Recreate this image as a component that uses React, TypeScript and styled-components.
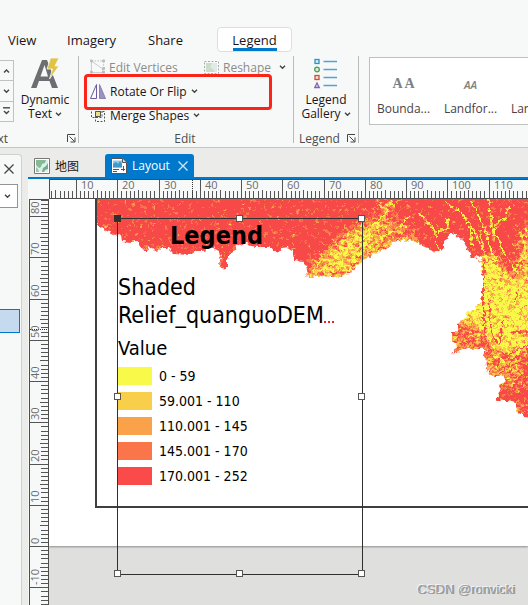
import React, { useEffect, useState } from "react";
import styled, { createGlobalStyle, css } from "styled-components";

const UI_FONT = `"Open Sans", "Noto Sans", "Noto Sans CJK SC", sans-serif`;
const MAP_FONT = `"DejaVu Sans Condensed", "DejaVu Sans", sans-serif`;
const BLUE = "#0078cc";

const GlobalStyle = createGlobalStyle`
  * { box-sizing: border-box; }
  body { margin: 0; background: #ebebea; overflow: hidden; }
  button { font: inherit; color: inherit; background: none; border: 0; padding: 0; margin: 0; }
  svg { display: block; flex: none; }
`;

const Window = styled.div`
  display: flex;
  flex-direction: column;
  height: 100vh;
  overflow: hidden;
  background: #ebebea;
  color: #1c1418;
  font-family: ${UI_FONT};
  font-size: 12px;
`;

/* ---------- ribbon ---------- */

const Ribbon = styled.header`
  flex: none;
  padding-top: 27px;
  background: #f7f9f9;
  border-bottom: 1px solid #c3c5c5;
`;

const RibbonTabs = styled.nav`
  display: flex;
  height: 25px;
  padding-left: 8px;
`;

const RibbonTab = styled.button<{ $width: number; $active?: boolean }>`
  position: relative;
  width: ${(p) => p.$width}px;
  text-align: left;
  font-size: 13px;
  line-height: 26px;
  ${(p) =>
    p.$active &&
    css`
      text-align: center;
      background: #fff;
      border: 1px solid #dcdedf;
      border-radius: 4px;
      line-height: 24px;
      &::after {
        content: "";
        position: absolute;
        left: 15px;
        right: 14px;
        bottom: 0;
        height: 3px;
        background: ${BLUE};
      }
    `}
`;

const Groups = styled.div`
  display: flex;
  height: 95px;
  padding: 4px 0 4px;
`;

const Group = styled.section<{ $width: number }>`
  position: relative;
  flex: none;
  display: flex;
  flex-direction: column;
  width: ${(p) => p.$width}px;
  border-right: 1px solid #b9bbbb;
`;

const GroupBody = styled.div`
  display: flex;
  flex: 1;
`;

const GroupFooter = styled.div<{ $center?: boolean }>`
  display: flex;
  align-items: center;
  justify-content: ${(p) => (p.$center ? "center" : "space-between")};
  height: 9px;
  line-height: 16px;
  padding: 0 2px 0 ${(p) => (p.$center ? 0 : 5)}px;
  color: #4c4c4c;
`;

const ClippedLabel = styled.span`
  display: flex;
  justify-content: flex-end;
  width: 8px;
  margin-left: -5px;
  overflow: hidden;
`;

const Stepper = styled.div`
  display: flex;
  flex-direction: column;
  width: 14px;
  height: 62px;
  margin-top: 4px;
  border: 1px solid #c0c2c2;
  border-left: 0;
`;

const StepButton = styled.button`
  display: flex;
  flex: 1;
  align-items: center;
  justify-content: center;
  & + & { border-top: 1px solid #c0c2c2; }
`;

const BigButton = styled.button<{ $width: number }>`
  display: flex;
  flex-direction: column;
  align-items: center;
  justify-content: flex-start;
  width: ${(p) => p.$width}px;
  padding-top: 1px;
  line-height: 14px;
  & > svg { height: 36px; }
`;

const Caption = styled.span`
  display: flex;
  align-items: center;
  gap: 3px;
`;

const EditList = styled.div`
  display: flex;
  flex-direction: column;
  gap: 4px;
  padding: 1px 0 0 11px;
`;

const EditRow = styled.div`
  display: flex;
  height: 20px;
`;

const EditButton = styled.button<{ $muted?: boolean; $width?: number }>`
  display: flex;
  align-items: center;
  justify-content: flex-start;
  gap: 4px;
  width: ${(p) => (p.$width ? `${p.$width}px` : "auto")};
  white-space: nowrap;
  color: ${(p) => (p.$muted ? "#8b8b8b" : "#1c1418")};
  & > svg + svg { margin-left: ${(p) => (p.$muted ? 4 : 0)}px; }
`;

const Highlight = styled.div`
  position: absolute;
  left: 5px;
  top: 18px;
  width: 188px;
  height: 36px;
  border: 3px solid #fb2418;
  border-radius: 4px;
`;

const Gallery = styled.div`
  display: flex;
  flex: 1;
  height: 68px;
  margin: 1px 0 0 10px;
  overflow: hidden;
  background: #fff;
  border: 1px solid #bfc1c1;
  border-right: 0;
`;

const GalleryItem = styled.button`
  flex: none;
  display: flex;
  flex-direction: column;
  align-items: center;
  justify-content: flex-start;
  width: 67px;
  padding-top: 16px;
  line-height: 16px;
  color: #4b4145;
`;

const Sample = styled.span<{ $italic?: boolean }>`
  height: 27px;
  color: #808080;
  font: ${(p) =>
    p.$italic ? `italic 600 11px/22px "Open Sans", sans-serif` : `bold 14px/20px "Liberation Serif", serif`};
`;

/* ---------- workspace ---------- */

const Workspace = styled.div`
  display: flex;
  flex: 1;
  min-height: 0;
  padding-top: 6px;
`;

const SidePane = styled.aside`
  flex: none;
  display: flex;
  flex-direction: column;
  width: 22px;
  margin-right: 6px;
  background: #f7f9f9;
  border: 1px solid #d0d1d1;
  border-width: 1px 1px 0 0;
  border-radius: 0 4px 0 0;
`;

const CloseButton = styled.button`
  display: flex;
  align-items: center;
  justify-content: center;
  width: 18px;
  height: 28px;
`;

const Picker = styled.button`
  display: flex;
  align-items: center;
  justify-content: center;
  width: 18px;
  height: 24px;
  background: #fff;
  border: 1px solid #929494;
  border-left: 0;
  margin-top: 1px;
  padding-right: 3px;
`;

const SelectedRow = styled.div`
  width: 20px;
  height: 24px;
  margin-top: 101px;
  background: #c5daef;
  border: 1px solid ${BLUE};
  border-left: 0;
`;

const Documents = styled.main`
  display: flex;
  flex-direction: column;
  flex: 1;
  min-width: 0;
`;

const DocTabs = styled.div`
  display: flex;
  height: 25px;
  padding-left: 6px;
  border-bottom: 2px solid ${BLUE};
`;

const DocTab = styled.button<{ $active?: boolean }>`
  display: flex;
  align-items: center;
  justify-content: flex-start;
  gap: 5px;
  height: 23px;
  width: ${(p) => (p.$active ? 89 : 71)}px;
  padding-left: ${(p) => (p.$active ? 6 : 0)}px;
  color: ${(p) => (p.$active ? "#fff" : "#1c1418")};
  background: ${(p) => (p.$active ? BLUE : "transparent")};
  border-radius: 3px 3px 0 0;
  & > svg + svg { margin-left: 3px; }
`;

const View = styled.div`
  display: grid;
  flex: 1;
  min-height: 0;
  grid-template-columns: 21px minmax(0, 1fr);
  grid-template-rows: 20px minmax(0, 1fr);
  background: #f7f9f9;
`;

const RulerSvg = styled.svg`
  width: 100%;
  height: 100%;
  overflow: hidden;
  text { font: 11px "Open Sans", sans-serif; fill: #6b6b6b; }
`;

const Canvas = styled.div`
  position: relative;
  overflow: hidden;
  background: #dfdfde;
`;

const Paper = styled.div`
  height: 347px;
  padding-left: 46px;
  background: #fff;
  box-shadow: 0 1px 2px #8c8c8c;
`;

const MapFrame = styled.div`
  height: 309px;
  overflow: hidden;
  border: solid #3f3f3f;
  border-width: 0 0 2px 2px;
`;

const LegendBox = styled.section`
  position: absolute;
  left: 68px;
  top: 19px;
  width: 246px;
  height: 357px;
  border: 1px solid #303030;
  color: #000;
  font-family: ${MAP_FONT};
`;

const LegendTitle = styled.h1`
  margin: 0;
  padding-left: 52px;
  font-size: 25px;
  line-height: 34px;
`;

const LayerName = styled.h2`
  margin: 20px 0 0;
  font-size: 23px;
  font-weight: 400;
  line-height: 28px;
  white-space: nowrap;
`;

const FieldName = styled.h3`
  margin: 5px 0 5px;
  font-size: 20px;
  font-weight: 400;
  line-height: 28px;
`;

const ClassList = styled.ul`
  display: flex;
  flex-direction: column;
  gap: 7px;
  margin: 0;
  padding: 0;
  list-style: none;
`;

const ClassRow = styled.li<{ $color: string }>`
  display: flex;
  align-items: center;
  gap: 7px;
  height: 18px;
  font-size: 14px;
  &::before {
    content: "";
    width: 34px;
    height: 18px;
    background: ${(p) => p.$color};
  }
`;

const LineEnd = styled.span`
  display: flex;
  align-items: baseline;
`;

const Handle = styled.i<{ $col: number; $row: number; $solid?: boolean }>`
  position: absolute;
  left: ${(p) => p.$col * 50}%;
  top: ${(p) => p.$row * 50}%;
  width: 7px;
  height: 7px;
  margin: -4px;
  background: ${(p) => (p.$solid ? "#303030" : "#fff")};
  border: 1px solid ${(p) => (p.$solid ? "#303030" : "#555")};
`;

const Watermark = styled.div`
  position: absolute;
  right: 13px;
  bottom: 6px;
  color: #a0a0a0;
  font: 13px/18px "Liberation Sans", sans-serif;
  text-shadow: -1px -1px 0 #f4f4f4, 1px 0 0 #8f8f8f;
`;

/* ---------- icons ---------- */

const Chevron = ({ up, bar }: { up?: boolean; bar?: boolean }) => (
  <svg width="7" height="8" viewBox="0 0 7 8" fill="none" stroke="#444" strokeWidth="1.4">
    {bar && <path d="M0 .8h7" />}
    <path d={up ? "M1 5.5l2.5-2.5L6 5.5" : bar ? "M1 4l2.5 2.5L6 4" : "M1 2.7l2.5 2.5L6 2.7"} />
  </svg>
);

const Launcher = () => (
  <svg width="9" height="9" viewBox="0 0 9 9" fill="none" stroke="#444">
    <path d="M.5 8V.5H8M2.5 2.5l5 5M8 3.5V8H3.5" />
  </svg>
);

const Cross = ({ color }: { color: string }) => (
  <svg width="10" height="10" viewBox="0 0 10 10" fill="none" stroke={color} strokeWidth="1.3">
    <path d="M.5.5l9 9M9.500.5l-9 9" />
  </svg>
);

const DynamicTextIcon = () => (
  <svg width="30" height="36" viewBox="0 0 30 36">
    <path d="M1 31L12 3h5l11 28h-6l-2.500-7H9l-2.500 7zM10.500 19.500h7.500L14.500 8z" fill="#6d6e71" fillRule="evenodd" />
    <path d="M20.500 1H29l-4 8h4L19.500 22l3-10H17z" fill="#dfc445" stroke="#f7f9f9" strokeWidth=".8" />
  </svg>
);

const LegendIcon = () => (
  <svg width="24" height="36" viewBox="0 0 24 36" fill="none" strokeWidth="1.3">
    <path d="M9.500 4.500H23M9.500 12.500H23M9.500 20.500H23M9.500 28.500H23" stroke="#4fa3d2" />
    <rect x="1" y="2.500" width="4" height="4" stroke="#2f93cb" fill="#d5eaf5" />
    <circle cx="3" cy="12.500" r="2.300" stroke="#4e9a54" fill="#dcebd9" />
    <rect x="1" y="18.500" width="4" height="4" stroke="#c95233" fill="#f5ddd5" />
    <path d="M3 26l2.300 4.500H.700z" stroke="#7e68ae" fill="#e3dcef" />
  </svg>
);

const VerticesIcon = () => (
  <svg width="15" height="16" viewBox="0 0 16 16" fill="none" stroke="#b5b5b5">
    <path d="M2 1.500h12M14.500 2v8" strokeDasharray="1.500 1.500" />
    <path d="M1.500 2v12h12v-4L2 2" stroke="#c8c8c8" />
    <path d="M.500.500h2v2h-2zM13.500.500h2v2h-2zM.500 12.500h2v2h-2zM13.500 12.500h2v2h-2zM13.500 8.500h2v2h-2z" fill="#bbb" stroke="#bbb" />
  </svg>
);

const ReshapeIcon = () => (
  <svg width="15" height="13" viewBox="0 0 15 13" fill="none">
    <path d="M2 2h11v9H2z" fill="#e0eae6" />
    <path d="M2 2h6l-2 4 3 2 2 3H2z" fill="#cbdccb" />
    <path d="M.5.5h14v12H.5z" stroke="#aaa" strokeDasharray="2 1.500" />
  </svg>
);

const FlipIcon = () => (
  <svg width="16" height="17" viewBox="0 0 16 17" fill="none" stroke="#6c5a9e">
    <path d="M6.500 1.500v14h-6z" fill="#faf9fc" />
    <path d="M9.500 1.500v14h6z" fill="#9d91bf" stroke="#8d80b2" />
  </svg>
);

const MergeIcon = () => (
  <svg width="16" height="14" viewBox="0 0 16 14" fill="none">
    <path d="M1.500 0v9.500H12V.5H1.500M5.500 3.500h9v10h-9z" stroke="#555" strokeDasharray="2 1.500" />
    <path d="M5.500 3.500h5v5h-5z" fill="#efdf82" stroke="#555" />
  </svg>
);

const MapIcon = () => (
  <svg width="16" height="16" viewBox="0 0 16 16">
    <path d="M.5.5h15v15H.5z" fill="#fff" stroke="#777" />
    <path d="M2 2h12v12H2z" fill="#dceff0" />
    <path d="M2 2h10l-1 3-3 1-1 3-2 1-3-3z" fill="#86b994" />
    <path d="M14 5v6l-3 1-1 2H8l1-4 3-2z" fill="#72ad85" />
    <path d="M2 9l2 2 1 3H2z" fill="#9bc4a1" />
  </svg>
);

const LayoutIcon = () => (
  <svg width="16" height="16" viewBox="0 0 16 16">
    <path d="M.5.5h11l4 4v11H.5z" fill="#fff" stroke="#555" />
    <path d="M2 2.500h9v7H2z" fill="#8fc8e8" />
    <path d="M2 9.500V6l3-2 2 2 2-3 2 3v3.500z" fill="#3f9acb" />
    <path d="M11.500.5v4h4" fill="#ddd" stroke="#555" />
    <path d="M2 11.500h6M2 13.500h4M10 11.500h4M12.500 8v5" stroke="#555" />
  </svg>
);

/* ---------- rulers ---------- */

const STEP = 4.125;
const MAJOR = STEP * 10;
const range = (from: number, to: number) => Array.from({ length: Math.max(0, to - from) }, (_, i) => from + i);

function useWindowSize() {
  const [size, setSize] = useState({ width: window.innerWidth, height: window.innerHeight });
  useEffect(() => {
    const update = () => setSize({ width: window.innerWidth, height: window.innerHeight });
    window.addEventListener("resize", update);
    return () => window.removeEventListener("resize", update);
  }, []);
  return size;
}

const HorizontalRuler = () => {
  const length = useWindowSize().width - 49;
  return (
    <RulerSvg shapeRendering="crispEdges">
      {range(-6, Math.ceil((length - 27) / STEP)).map((i) => {
        const x = Math.round(27 + i * STEP) + 0.5;
        const top = i % 10 === 0 ? 1 : i % 5 === 0 ? 11 : 12;
        return <path key={i} d={`M${x} ${top}V20`} stroke="#555" />;
      })}
      <path d={`M0 .5H${length}M0 19.5H${length}M.5 0V20`} stroke="#4d4d4d" />
      <path d="M143.500 1V20" stroke="#333" strokeDasharray="1 1" />
      {range(0, Math.floor((length - 50) / MAJOR) + 1).map((i) => (
        <text key={i} x={Math.round(27 + i * MAJOR) + 5} y="10">
          {(i + 1) * 10}
        </text>
      ))}
    </RulerSvg>
  );
};

const VerticalRuler = () => {
  const length = useWindowSize().height - 199;
  return (
    <RulerSvg shapeRendering="crispEdges">
      {range(-84, Math.ceil((length - 347) / STEP)).map((i) => {
        const y = Math.round(347 + i * STEP) + 0.5;
        const left = i % 10 === 0 ? 2 : i % 5 === 0 ? 12 : 13;
        return <path key={i} d={`M${left} ${y}H20`} stroke="#555" />;
      })}
      <path d={`M1.500 0V${length}M20.500 0V${length}M1 .5H21`} stroke="#4d4d4d" />
      <path d="M2 130.500H20" stroke="#333" strokeDasharray="1 1" />
      {range(-8, Math.floor((length - 347) / MAJOR) + 1).map((i) => (
        <text key={i} transform={`translate(11 ${Math.round(347 + i * MAJOR) - 2}) rotate(-90)`}>
          {-i * 10}
        </text>
      ))}
    </RulerSvg>
  );
};

/* ---------- terrain ---------- */

const COAST =
  "M80 190V215L97 224L105 230L115 235L121 233L122 241L131 242L137 241L140 245L144 251L147 251L149 246L157 252L161 248L168 248L173 253L190 254L195 251L203 251L212 247L218 250L221 257L219 263L224 270L227 266L227 259L232 253L237 246L247 243L255 247L270 247L278 253L282 248L287 247L293 251L293 260L303 261L306 266L308 277L318 276L333 277L350 274L357 266L366 258L377 253L389 248L392 243L404 239L416 242L426 247L437 252L444 248L444 241L448 238L450 233L454 233L457 237L464 241L468 250L471 258L476 256L480 258L481 267L483 277L482 290L481 297L482 303L476 305L474 311L467 311L465 319L457 322L457 331L452 332L452 340L456 343L457 348L452 354L467 349L487 349L482 355L486 360L488 373L493 376L503 376L505 380L500 385L499 393L496 401L507 401L516 403L517 412L521 413L522 417L545 418V190Z";

const VALLEYS = [
  "M445 201L453 208L461 212L468 222L473 230L479 242L485 252L489 265L490 290L492 320",
  "M471 201L476 210L481 222L487 234L491 250L496 268L495 290",
  "M488 199L491 215L493 232L500 242L504 254L511 262L516 272L528 276",
  "M419 214L427 222L436 232L437 250",
  "M436 232L448 228L448 218",
  "M493 236L497 222L506 218L509 206",
  "M393 199L388 212L378 220L370 228L366 245",
  "M408 216L402 224L392 232L380 238",
  "M521 236L526 248L520 262L514 270",
  "M470 225L472 245M480 230L484 250M376 205L390 210",
];

const Terrain = () => (
  <svg width="431" height="220" viewBox="97 199 431 220" shapeRendering="crispEdges" role="img" aria-label="Elevation map">
    <defs>
      <clipPath id="coast">
        <path d={COAST} />
      </clipPath>
      <filter id="soft" x="-20%" y="-20%" width="140%" height="140%">
        <feGaussianBlur stdDeviation="5" />
      </filter>
      <filter id="relief" filterUnits="userSpaceOnUse" x="80" y="190" width="465" height="230" colorInterpolationFilters="sRGB">
        <feTurbulence type="fractalNoise" baseFrequency=".25 .32" numOctaves="3" seed="7" result="n" />
        <feColorMatrix in="n" type="matrix" values="1 0 0 0 0 1 0 0 0 0 1 0 0 0 0 0 0 0 0 1" result="noise" />
        <feComposite in="SourceGraphic" in2="noise" operator="arithmetic" k2="1" k3="1" k4="-.5" />
        <feComponentTransfer>
          <feFuncR type="discrete" tableValues=".976 .976" />
          <feFuncG type="discrete" tableValues=".29 .29 .29 .46 .635 .81 .976 .976 .976 .976" />
          <feFuncB type="discrete" tableValues=".29 .29" />
          <feFuncA type="discrete" tableValues="1 1" />
        </feComponentTransfer>
      </filter>
      <filter id="rough" filterUnits="userSpaceOnUse" x="80" y="190" width="465" height="235">
        <feTurbulence type="fractalNoise" baseFrequency=".25" numOctaves="2" seed="3" />
        <feDisplacementMap in="SourceGraphic" scale="6" xChannelSelector="R" yChannelSelector="G" />
      </filter>
    </defs>
    <g filter="url(#rough)">
      <g clipPath="url(#coast)">
        <g filter="url(#relief)">
          <path d="M80 190H545V420H80z" fill="#272727" />
          <g filter="url(#soft)">
            <path d="M302 280L318 258L338 238L362 222L385 217L396 228L390 255L350 280z" fill="#929292" />
            <path d="M378 199H394V222L412 228L420 240V260H372z" fill="#6a6a6a" />
            <path d="M480 258L494 252L508 275L522 280L535 268V350L515 368L500 380L495 350L475 325L450 325L462 300z" fill="#a2a2a2" />
            <path d="M520 225H540V280H514z" fill="#777" />
            <path d="M445 335L480 328L482 352H445zM480 352L500 350L502 380H480zM500 350H535V420H490V378z" fill="#6a6a6a" />
            <path d="M522 350H540V420H525zM496 388H530V405H496z" fill="#2f2f2f" />
          </g>
          <g fill="none" stroke="#999" strokeWidth="1.700">
            {VALLEYS.map((d) => (
              <path key={d} d={d} />
            ))}
          </g>
          <g fill="none" stroke="#383838" strokeWidth="1.600">
            <path d="M484 262L483 300L486 345M489 300L491 330L498 345M484 365L503 358L528 345M455 340L468 333L480 330M460 346L478 337M500 375L512 360L528 350M512 402L514 388L522 375M502 320L500 345M487 372L500 362M515 302L518 290M512 332H528" />
          </g>
          <path d="M306 280L310 273L340 272L358 260L380 246L392 240V248L352 280z" fill="#727272" fillOpacity=".9" />
        </g>
      </g>
    </g>
  </svg>
);

const CLASSES = [
  ["#f9f94a", "0 - 59"],
  ["#f8ce4a", "59.001 - 110"],
  ["#f9a24a", "110.001 - 145"],
  ["#fa764a", "145.001 - 170"],
  ["#fa4a4a", "170.001 - 252"],
];

const HANDLES = [[0, 0], [1, 0], [2, 0], [0, 1], [2, 1], [0, 2], [1, 2], [2, 2]];

export default function App() {
  return (
    <Window>
      <GlobalStyle />
      <Ribbon>
        <RibbonTabs>
          <RibbonTab $width={59}>View</RibbonTab>
          <RibbonTab $width={81}>Imagery</RibbonTab>
          <RibbonTab $width={69}>Share</RibbonTab>
          <RibbonTab $width={75} $active>Legend</RibbonTab>
        </RibbonTabs>
        <Groups>
          <Group $width={79}>
            <GroupBody>
              <Stepper>
                <StepButton aria-label="Previous"><Chevron up /></StepButton>
                <StepButton aria-label="Next"><Chevron /></StepButton>
                <StepButton aria-label="More"><Chevron bar /></StepButton>
              </Stepper>
              <BigButton $width={62}>
                <DynamicTextIcon />
                <Caption>Dynamic</Caption>
                <Caption>Text <Chevron /></Caption>
              </BigButton>
            </GroupBody>
            <GroupFooter>
              <ClippedLabel>Text</ClippedLabel>
              <Launcher />
            </GroupFooter>
          </Group>
          <Group $width={215}>
            <GroupBody>
              <EditList>
                <EditRow>
                  <EditButton $muted $width={114}><VerticesIcon />Edit Vertices</EditButton>
                  <EditButton $muted><ReshapeIcon />Reshape <Chevron /></EditButton>
                </EditRow>
                <EditRow>
                  <EditButton><FlipIcon />Rotate Or Flip <Chevron /></EditButton>
                </EditRow>
                <EditRow>
                  <EditButton><MergeIcon />Merge Shapes <Chevron /></EditButton>
                </EditRow>
              </EditList>
            </GroupBody>
            <GroupFooter $center>Edit</GroupFooter>
            <Highlight />
          </Group>
          <Group $width={65}>
            <GroupBody>
              <BigButton $width={64}>
                <LegendIcon />
                <Caption>Legend</Caption>
                <Caption>Gallery <Chevron /></Caption>
              </BigButton>
            </GroupBody>
            <GroupFooter>Legend<Launcher /></GroupFooter>
          </Group>
          <Gallery>
            <GalleryItem><Sample>A A</Sample>Bounda...</GalleryItem>
            <GalleryItem><Sample $italic>AA</Sample>Landfor...</GalleryItem>
            <GalleryItem><Sample />Landfor...</GalleryItem>
          </Gallery>
        </Groups>
      </Ribbon>
      <Workspace>
        <SidePane>
          <CloseButton aria-label="Close pane"><Cross color="#444" /></CloseButton>
          <Picker aria-label="Search options"><Chevron /></Picker>
          <SelectedRow />
        </SidePane>
        <Documents>
          <DocTabs>
            <DocTab><MapIcon />地图</DocTab>
            <DocTab $active><LayoutIcon />Layout<Cross color="#cfe8fa" /></DocTab>
          </DocTabs>
          <View>
            <span />
            <HorizontalRuler />
            <VerticalRuler />
            <Canvas>
              <Paper>
                <MapFrame><Terrain /></MapFrame>
              </Paper>
              <LegendBox>
                <LegendTitle>Legend</LegendTitle>
                <LayerName>
                  Shaded
                  <LineEnd>
                    Relief_quanguoDEM
                    <svg width="11" height="2" viewBox="0 0 11 2" fill="#f02020" aria-hidden="true">
                      <path d="M0 0h2v2H0zM4 0h2v2H4zM8 0h2v2H8z" />
                    </svg>
                  </LineEnd>
                </LayerName>
                <FieldName>Value</FieldName>
                <ClassList>
                  {CLASSES.map(([color, label]) => (
                    <ClassRow key={label} $color={color}>{label}</ClassRow>
                  ))}
                </ClassList>
                {HANDLES.map(([c, r], i) => (
                  <Handle key={i} $col={c} $row={r} $solid={i === 0} />
                ))}
              </LegendBox>
              <Watermark>CSDN @ronvicki</Watermark>
            </Canvas>
          </View>
        </Documents>
      </Workspace>
    </Window>
  );
}
